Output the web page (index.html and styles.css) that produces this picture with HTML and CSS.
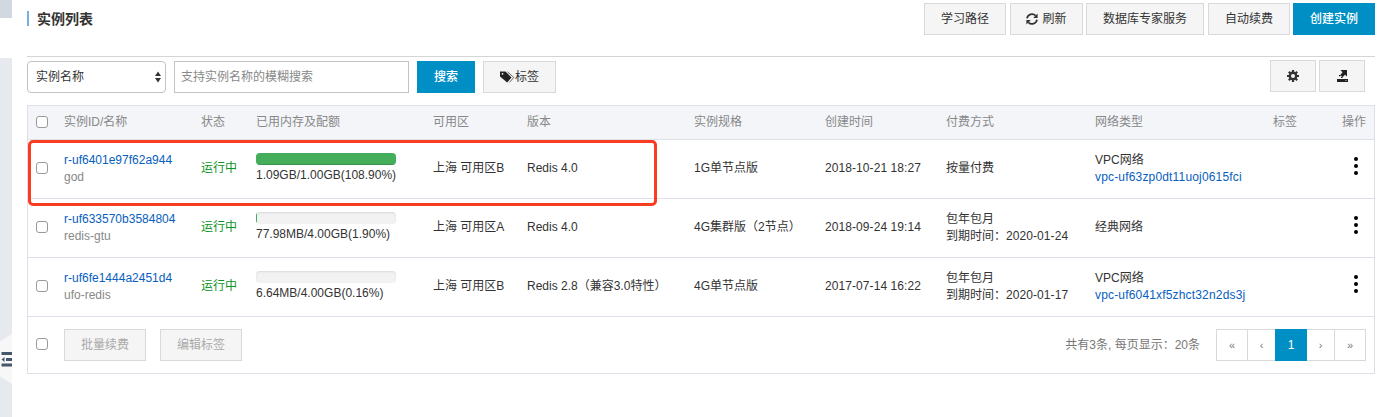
FILE: index.html
```html
<!DOCTYPE html>
<html lang="zh-CN">
<head>
<meta charset="utf-8">
<title>实例列表</title>
<link rel="stylesheet" href="styles.css">
</head>
<body>
<div class="page">
  <aside class="rail">
    <div class="rail-top"></div>
    <div class="rail-body">
      <svg class="rail-handle" width="12" height="50" viewBox="0 0 12 50">
        <path d="M12 0L0 7.5V42.5L12 50Z" fill="#f7f7f7"/>
        <path d="M1.500 18H12v3H1.500zM6 24h6v3H6zM1.500 29.500H12v3H1.500zM1.500 25.500L4.500 23v5z" fill="#44576b"/>
      </svg>
    </div>
  </aside>
  <main class="main">
    <header class="header">
      <h1 class="title">实例列表</h1>
      <div class="actions">
        <button class="btn w82">学习路径</button>
        <button class="btn refresh"><svg width="12" height="12" viewBox="0 0 12 12"><path d="M1 5.300A5 5 0 0 1 9.600 2.700M11 6.700A5 5 0 0 1 2.400 9.300" fill="none" stroke="#333" stroke-width="1.700"/><path d="M11.600.5V5H7.200zM.4 11.500V7h4.400z" fill="#333"/></svg><span>刷新</span></button>
        <button class="btn expert">数据库专家服务</button>
        <button class="btn w82 renew">自动续费</button>
        <button class="btn primary w82 create">创建实例</button>
      </div>
    </header>
    <section class="toolbar">
      <div class="select"><span>实例名称</span><svg width="6" height="12" viewBox="0 0 6 12"><path d="M0 5L3 .5 6 5zM0 7l3 4.500L6 7z" fill="#333"/></svg></div>
      <input class="search" type="text" placeholder="支持实例名称的模糊搜索">
      <button class="btn primary find">搜索</button>
      <button class="btn tag"><svg width="15" height="12" viewBox="0 0 15 12"><path d="M0 .5h5.500L11.500 6.500 7.200 11.500 0 5.500z" fill="#222"/><circle cx="2.500" cy="2.800" r=".9" fill="#f5f5f5"/><path d="M7.500.8l6.300 5.700L9.500 11.300" fill="none" stroke="#555" stroke-width=".9"/></svg><span>标签</span></button>
      <div class="tools">
        <button class="btn tool"><svg width="12" height="12" viewBox="0 0 12 12"><circle cx="6" cy="6" r="3.200" fill="none" stroke="#333" stroke-width="2.400"/><path d="M6 0v2.500M6 9.500V12M0 6h2.500M9.500 6H12M1.800 1.800l1.700 1.700M8.500 8.500l1.700 1.700M1.800 10.200l1.700-1.700M8.500 3.500l1.700-1.700" stroke="#333" stroke-width="2.200"/></svg></button>
        <button class="btn tool"><svg width="11" height="12" viewBox="0 0 11 12"><path d="M0 9h11v3H0zM3.500 0H10v6.500L8 4.800 5.500 7.300 3.300 5 5.500 2.200zM2 5h1.500v1.200H2zM4 7h1.500v1H4z" fill="#222"/><path d="M8.500 10.500h1" stroke="#f5f5f5" stroke-width=".8"/></svg></button>
      </div>
    </section>
    <section class="table">
      <div class="row head">
        <input type="checkbox" class="check"><div>实例ID/名称</div><div>状态</div><div>已用内存及配额</div><div>可用区</div><div>版本</div><div>实例规格</div><div>创建时间</div><div>付费方式</div><div>网络类型</div><div>标签</div><div>操作</div>
      </div>
      <div class="row">
        <input type="checkbox" class="check">
        <div><a class="link">r-uf6401e97f62a944</a><br><span class="muted">god</span></div>
        <div class="running">运行中</div>
        <div class="usage"><div class="bar"><div class="fill" style="width:100%"></div></div>1.09GB/1.00GB(108.90%)</div>
        <div>上海 可用区B</div><div>Redis 4.0</div><div>1G单节点版</div><div class="date">2018-10-21 18:27</div><div>按量付费</div>
        <div>VPC网络<br><a class="link vpc">vpc-uf63zp0dt11uoj0615fci</a></div><div></div>
        <div class="more"><i></i><i></i><i></i></div>
        <div class="highlight"></div>
      </div>
      <div class="row">
        <input type="checkbox" class="check">
        <div><a class="link">r-uf633570b3584804</a><br><span class="muted">redis-gtu</span></div>
        <div class="running">运行中</div>
        <div class="usage"><div class="bar"><div class="fill" style="width:0.7%"></div></div>77.98MB/4.00GB(1.90%)</div>
        <div>上海 可用区A</div><div>Redis 4.0</div><div>4G集群版（2节点）</div><div class="date">2018-09-24 19:14</div><div>包年包月<br>到期时间：<span class="date">2020-01-24</span></div>
        <div>经典网络</div><div></div>
        <div class="more"><i></i><i></i><i></i></div>
      </div>
      <div class="row">
        <input type="checkbox" class="check">
        <div><a class="link">r-uf6fe1444a2451d4</a><br><span class="muted">ufo-redis</span></div>
        <div class="running">运行中</div>
        <div class="usage"><div class="bar"></div>6.64MB/4.00GB(0.16%)</div>
        <div>上海 可用区B</div><div>Redis 2.8（兼容3.0特性）</div><div>4G单节点版</div><div class="date">2017-07-14 16:22</div><div>包年包月<br>到期时间：<span class="date">2020-01-17</span></div>
        <div>VPC网络<br><a class="link vpc">vpc-uf6041xf5zhct32n2ds3j</a></div><div></div>
        <div class="more"><i></i><i></i><i></i></div>
      </div>
      <footer class="foot">
        <input type="checkbox" class="check">
        <button class="btn w82 off">批量续费</button>
        <button class="btn w82 off">编辑标签</button>
        <span class="total">共有3条, 每页显示：20条</span>
        <nav class="pager"><a class="wide">«</a><a>‹</a><a class="current">1</a><a>›</a><a class="wide">»</a></nav>
      </footer>
    </section>
  </main>
</div>
</body>
</html>
```

FILE: styles.css
```css
* { box-sizing: border-box; }
body {
  margin: 0;
  background: #fff;
  color: #333;
  font: 12px/17px "Liberation Sans", "Noto Sans CJK SC", sans-serif;
}
.page { display: flex; height: 417px; overflow: hidden; }
.rail { width: 12px; flex: none; display: flex; flex-direction: column; gap: 40px; }
.rail-top { height: 18px; background: #d2d8e0; }
.rail-body { flex: 1; background: #e6e9ee; padding-top: 276px; }
.rail-handle { display: block; }
.main { width: 1348px; margin-left: 15px; flex: none; }
.header {
  display: flex;
  justify-content: space-between;
  height: 57px;
  padding-top: 3px;
  border-bottom: 1px solid #d5d5d5;
}
.title {
  margin: 8px 0 0;
  height: 15px;
  border-left: 2px solid #73b1e0;
  padding-left: 8px;
  font-size: 14px;
  line-height: 17px;
  font-weight: bold;
}
.actions { display: flex; }
.btn {
  display: flex;
  align-items: center;
  justify-content: center;
  flex: none;
  height: 32px;
  margin: 0;
  padding: 0;
  border: 1px solid #d9d9d9;
  border-radius: 0;
  background: #f5f5f5;
  color: #333;
  font: inherit;
}
.w82 { width: 82px; }
.refresh { width: 73px; margin-left: 4px; gap: 4px; padding-top: 1px; }
.refresh svg { margin-bottom: 1px; }
.expert { width: 118px; margin-left: 3px; }
.renew { margin-left: 4px; }
.create { margin-left: 3px; }
.primary { background: #008fc5; border-color: #008fc5; color: #fff; font-weight: 500; }
.toolbar { display: flex; padding-top: 4px; height: 48px; }
.select {
  display: flex;
  align-items: center;
  justify-content: space-between;
  width: 139px;
  height: 32px;
  padding: 1px 4px 0 8px;
  border: 1px solid #c3c3c3;
  border-radius: 4px;
}
.select svg { margin-bottom: 1px; }
.search {
  width: 235px;
  height: 32px;
  margin-left: 8px;
  padding: 0 6px;
  border: 1px solid #c3c3c3;
  font: inherit;
}
.search::placeholder { color: #888; }
.find { width: 58px; margin-left: 8px; }
.tag { width: 73px; margin-left: 8px; padding: 1px 0 0; }
.tag svg { margin-bottom: 2px; }
.tools { display: flex; gap: 3px; margin: -1px 10px 0 auto; }
.tool { width: 46px; }
.table { border: 1px solid #dce0e8; }
.row {
  position: relative;
  display: grid;
  grid-template-columns: 28px 137px 55px 177px 94px 167px 131px 121px 149px 178px 69px 1fr;
  align-items: center;
  height: 59px;
  padding: 0 0 1px 8px;
  border-bottom: 1px solid #dce0e8;
  white-space: nowrap;
}
.row.head { height: 34px; padding-bottom: 0; background: #f3f5f9; color: #888; }
.check {
  appearance: none;
  width: 12px;
  height: 12px;
  margin: 0 0 2px;
  border: 1px solid #999;
  border-radius: 3px;
  background: #fff;
}
.head .check { margin: 0 0 1px; }
.link { color: #0660c0; }
.vpc { letter-spacing: 0.17px; }
.date { letter-spacing: 0.08px; }
.muted { color: #888; }
.running { color: #0a9425; }
.usage { padding-bottom: 1px; }
.bar {
  width: 140px;
  height: 12px;
  margin-bottom: 2px;
  border-radius: 4px;
  overflow: hidden;
  background: #f2f2f2;
  box-shadow: inset 0 1px 2px rgba(0, 0, 0, 0.1);
}
.fill { height: 12px; background: #45ae5a; box-shadow: inset 0 -1px 0 rgba(0, 0, 0, 0.15); }
.more { display: flex; flex-direction: column; align-items: center; gap: 3px; width: 28px; padding-bottom: 6px; }
.more i { width: 4px; height: 4px; border-radius: 50%; background: #000; }
.highlight {
  position: absolute;
  left: 0;
  top: 0;
  width: 629px;
  height: 66px;
  z-index: 2;
  border: 3px solid #fa3c20;
  border-radius: 5px;
}
.foot { display: flex; align-items: center; height: 56px; padding: 0 8px; }
.foot .check { margin: 0 16px 2px 0; }
.off { color: #aaa; margin-right: 14px; }
.total { margin-left: auto; margin-right: 16px; color: #777; }
.pager { display: flex; height: 32px; border: 1px solid #d9d9d9; }
.pager a {
  width: 27px;
  display: flex;
  align-items: center;
  justify-content: center;
  color: #777;
  font-size: 11px;
}
.pager .wide { width: 31px; }
.pager .wide:first-child { border-right: 1px solid #d9d9d9; }
.pager .wide:last-child { border-left: 1px solid #d9d9d9; }
.pager .current { width: 32px; margin: -1px 0; background: #008fc5; color: #fff; font-size: 12px; }
```
